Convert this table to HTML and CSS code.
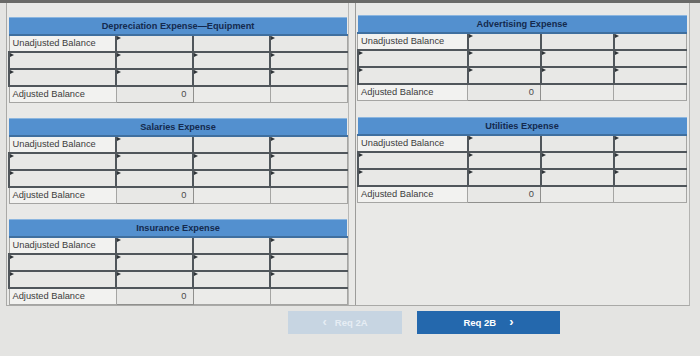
FILE: index.html
```html
<!DOCTYPE html>
<html lang="en">
<head>
<meta charset="utf-8">
<title>Adjusted T-accounts</title>
<link rel="stylesheet" href="styles.css">
</head>
<body>
<div class="topbar"></div>
<div class="sheet">
  <div class="pane pane-left">
    <table class="ledger ledger-left">
      <colgroup><col class="c-label"><col class="c-amt"><col class="c-amt"><col class="c-amt"></colgroup>
      <tr><th colspan="4">Depreciation Expense—Equipment</th></tr>
      <tr><td class="label">Unadjusted Balance</td><td class="in mark"></td><td class="in"></td><td class="in mark"></td></tr>
      <tr><td class="in mark"></td><td class="in mark"></td><td class="in mark"></td><td class="in mark"></td></tr>
      <tr><td class="in mark"></td><td class="in mark"></td><td class="in mark"></td><td class="in mark"></td></tr>
      <tr><td class="label">Adjusted Balance</td><td class="total">0</td><td class="blank"></td><td class="blank"></td></tr>
    </table>
    <table class="ledger ledger-left">
      <colgroup><col class="c-label"><col class="c-amt"><col class="c-amt"><col class="c-amt"></colgroup>
      <tr><th colspan="4">Salaries Expense</th></tr>
      <tr><td class="label">Unadjusted Balance</td><td class="in mark"></td><td class="in"></td><td class="in mark"></td></tr>
      <tr><td class="in mark"></td><td class="in mark"></td><td class="in mark"></td><td class="in mark"></td></tr>
      <tr><td class="in mark"></td><td class="in mark"></td><td class="in mark"></td><td class="in mark"></td></tr>
      <tr><td class="label">Adjusted Balance</td><td class="total">0</td><td class="blank"></td><td class="blank"></td></tr>
    </table>
    <table class="ledger ledger-left">
      <colgroup><col class="c-label"><col class="c-amt"><col class="c-amt"><col class="c-amt"></colgroup>
      <tr><th colspan="4">Insurance Expense</th></tr>
      <tr><td class="label">Unadjusted Balance</td><td class="in mark"></td><td class="in"></td><td class="in mark"></td></tr>
      <tr><td class="in mark"></td><td class="in mark"></td><td class="in mark"></td><td class="in mark"></td></tr>
      <tr><td class="in mark"></td><td class="in mark"></td><td class="in mark"></td><td class="in mark"></td></tr>
      <tr><td class="label">Adjusted Balance</td><td class="total">0</td><td class="blank"></td><td class="blank"></td></tr>
    </table>
  </div>
  <div class="pane pane-right">
    <table class="ledger ledger-right">
      <colgroup><col class="c-label"><col class="c-amt"><col class="c-amt"><col class="c-amt"></colgroup>
      <tr><th colspan="4">Advertising Expense</th></tr>
      <tr><td class="label">Unadjusted Balance</td><td class="in mark"></td><td class="in"></td><td class="in mark"></td></tr>
      <tr><td class="in mark"></td><td class="in mark"></td><td class="in mark"></td><td class="in mark"></td></tr>
      <tr><td class="in mark"></td><td class="in mark"></td><td class="in mark"></td><td class="in mark"></td></tr>
      <tr><td class="label">Adjusted Balance</td><td class="total">0</td><td class="blank"></td><td class="blank"></td></tr>
    </table>
    <table class="ledger ledger-right">
      <colgroup><col class="c-label"><col class="c-amt"><col class="c-amt"><col class="c-amt"></colgroup>
      <tr><th colspan="4">Utilities Expense</th></tr>
      <tr><td class="label">Unadjusted Balance</td><td class="in mark"></td><td class="in"></td><td class="in mark"></td></tr>
      <tr><td class="in mark"></td><td class="in mark"></td><td class="in mark"></td><td class="in mark"></td></tr>
      <tr><td class="in mark"></td><td class="in mark"></td><td class="in mark"></td><td class="in mark"></td></tr>
      <tr><td class="label">Adjusted Balance</td><td class="total">0</td><td class="blank"></td><td class="blank"></td></tr>
    </table>
  </div>
</div>
<nav class="nav">
  <button class="btn btn-prev" disabled><span class="chev">‹</span>Req 2A</button>
  <button class="btn btn-next">Req 2B<span class="chev">›</span></button>
</nav>
</body>
</html>
```
FILE: styles.css
```css
* { box-sizing: border-box; }

html, body {
  margin: 0;
  padding: 0;
  background: #e4e4e2;
  font-family: "Liberation Sans", Arial, sans-serif;
  color: #3a3a3a;
}

.topbar {
  height: 3px;
  background: #6a6a68;
}

/* Two side-by-side panes of T-account grids */
.sheet {
  display: flex;
  gap: 6px;
  margin-left: 6px;
  width: 684px;
  border-left: 1px solid #a9a9a7;
  border-right: 1px solid #b3b3b1;
  border-bottom: 1px solid #a9a9a7;
  background: #e9e9e7;
}

.pane {
  display: flex;
  flex-direction: column;
  gap: 15px;
  padding-top: 14px;
}

.pane-left {
  width: 342px;
  padding-left: 1px;
  border-right: 1px solid #b8b8b6;
}

.pane-right {
  flex: 1;
  gap: 16px;
  padding-top: 12px;
  padding-left: 1px;
  padding-right: 2px;
  border-left: 1px solid #9c9c9a;
}

.ledger {
  border-collapse: collapse;
  table-layout: fixed;
  font-size: 9.3px;
}

.ledger-left { width: 338px; }
.ledger-left .c-label { width: 107px; }
.ledger-left .c-amt { width: 77px; }

.ledger-right { width: 330px; }
.ledger-right .c-label { width: 110px; }
.ledger-right .c-amt { width: 73px; }

.ledger th {
  height: 14px;
  padding: 0;
  background: #5390cf;
  border-top: 1px solid #8cb6df;
  border-bottom: 2px solid #3f6f9f;
  color: #142a4e;
  font-size: 9.2px;
  font-weight: bold;
  text-align: center;
  line-height: 12px;
}

.ledger tr { height: 17px; }

.ledger td {
  position: relative;
  padding: 0 3px;
  border: 1px solid #a5a5a3;
  background: #e8e8e6;
  white-space: nowrap;
  line-height: 13px;
}

.ledger td.label {
  background: #f2f2f0;
  color: #3c3c3c;
}

.ledger td.in {
  border-top: 2px solid #50565b;
  border-bottom: 2px solid #50565b;
  border-left: 2px solid #50565b;
}

.ledger td.total {
  text-align: right;
  padding-right: 6px;
  border: 1px solid #8f8f8d;
  color: #4a4a4a;
}

.ledger td.blank {
  background: #ebebe9;
}

/* small dropdown marker in the top-left corner of an entry cell */
.ledger td.mark::before {
  content: "";
  position: absolute;
  left: 0;
  top: 0;
  border-left: 4px solid #2f3438;
  border-top: 2px solid transparent;
  border-bottom: 2px solid transparent;
}

.nav {
  display: flex;
  gap: 15px;
  padding-left: 288px;
  margin-top: 5px;
}

.btn {
  height: 23px;
  border: 0;
  padding: 0;
  font-family: "Liberation Sans", Arial, sans-serif;
  font-size: 9.5px;
  font-weight: bold;
  display: flex;
  align-items: center;
  justify-content: center;
  gap: 8px;
}

.btn-prev {
  width: 114px;
  background: #c7d5e2;
  color: #e6edf4;
}

.btn-next {
  width: 143px;
  background: #2468ad;
  color: #ffffff;
  gap: 13px;
}

.chev {
  font-size: 13px;
  line-height: 1;
  position: relative;
  top: -1px;
}
```
